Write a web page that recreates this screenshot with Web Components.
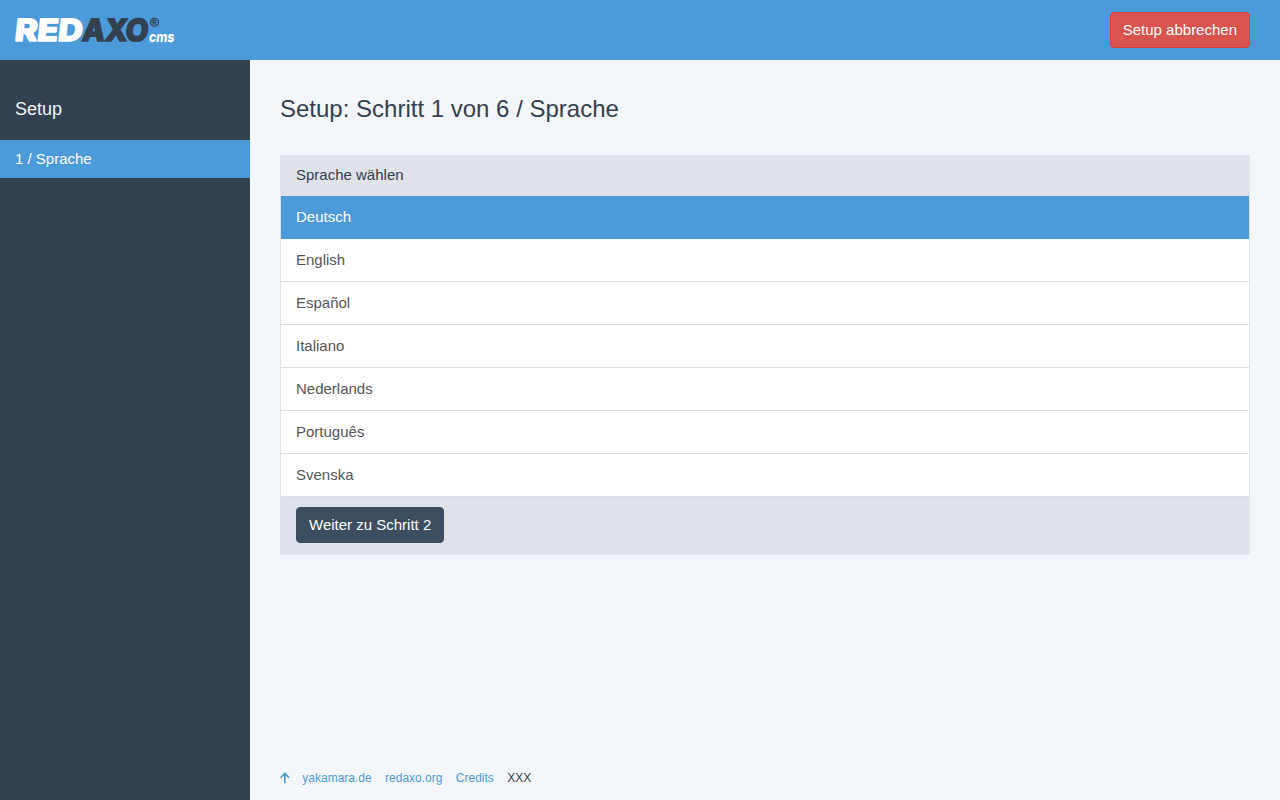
<!DOCTYPE html>
<html lang="de">
<head>
<meta charset="utf-8">
<title>Setup</title>
<style>
html,body{margin:0;height:100%}
body{font:15px/21px "Liberation Sans",Arial,sans-serif;color:#324050;background:#f3f6fb;overflow:hidden}
</style>
</head>
<body>
<setup-app></setup-app>
<script>
const define = (name, html) => customElements.define(name, class extends HTMLElement {
  constructor() {
    super();
    this.attachShadow({mode: 'open'}).innerHTML = html;
  }
});

define('brand-logo', `
<style>
:host{display:block;width:164px;height:30px}
svg{display:block;overflow:visible}
text{font-family:Inter,"Liberation Sans",sans-serif;font-weight:800}
.w{fill:#fff;stroke:#fff}.d{fill:#324050;stroke:#324050}
</style>
<svg width="164" height="30" viewBox="0 0 164 30" role="img" aria-label="REDAXO cms">
  <g transform="translate(0 26.2) skewX(-6)" font-size="30.6" stroke-width="1.6" stroke-linejoin="round">
    <text class="w" x="-1" y="0" textLength="68" lengthAdjust="spacingAndGlyphs">RED</text>
    <text class="d" x="66.6" y="0" textLength="66" lengthAdjust="spacingAndGlyphs">AXO</text>
  </g>
  <circle cx="139.5" cy="7.4" r="3.9" fill="none" stroke="#324050" stroke-width="1.3"/>
  <text class="d" x="137.2" y="9.8" font-size="6.6" stroke="none" stroke-width="0">R</text>
  <g transform="translate(133.6 26.8) skewX(-6)">
    <text class="w" x="0" y="0" font-size="14.5" stroke-width="0" textLength="25.5" lengthAdjust="spacingAndGlyphs">cms</text>
  </g>
</svg>`);

define('ui-button', `
<style>
:host{display:inline-block}
button{display:block;box-sizing:border-box;height:36px;margin:0;padding:0 12px;border:1px solid #3c4d60;border-radius:4px;background:#3c4d60;color:#fff;font:inherit;line-height:34px;white-space:nowrap}
:host([danger]) button{background:#d9534f;border-color:#d43f3a}
</style><button><slot></slot></button>`);

define('top-bar', `
<style>
:host{display:flex;box-sizing:border-box;height:60px;padding:0 30px 0 15px;align-items:center;justify-content:space-between;background:#4b9ad9}
</style><brand-logo></brand-logo><slot></slot>`);

define('side-nav', `
<style>
:host{display:block;background:#324050;color:#fff}
h4{margin:0;padding:39px 15px 21px;font-size:18px;font-weight:400;line-height:20px;color:#f3f6fb}
.item{padding:0 15px;height:38px;line-height:38px;background:#4b9ad9}
</style><h4><slot name="title"></slot></h4><div class="item"><slot></slot></div>`);

define('list-item', `
<style>
:host{display:block;box-sizing:border-box;height:43px;padding:0 15px;line-height:42px;background:#fff;border-bottom:1px solid #dddddd;color:#555}
:host([active]){background:#4b9ad9;border-color:#4b9ad9;color:#fff}
</style><slot></slot>`);

define('choice-panel', `
<style>
:host{display:block;border:1px solid #dfe3e9;border-bottom-color:#e6eaf0;background:#dfe3e9 padding-box}
header{height:40px;line-height:38px;padding:0 15px}
footer{display:flex;padding:10px 15px 11px}
</style>
<header><slot name="heading"></slot></header><slot></slot><footer><slot name="action"></slot></footer>`);

define('page-footer', `
<style>
:host{display:flex;align-items:center;font-size:12px;line-height:18px}
svg{display:block;width:10px;height:12px;margin-right:12.3px}
a{color:#4b9ad9;margin-right:13.4px}
</style>
<svg viewBox="0 0 10 12" fill="none" stroke="#4b9ad9" stroke-width="1.6"><path d="M4.8 11.3V1.6M.6 5.7l4.2-4.2 4.2 4.2"/></svg>
<a>yakamara.de</a><a>redaxo.org</a><a>Credits</a><span>XXX</span>`);

define('setup-app', `
<style>
:host{display:grid;height:100vh;grid-template:60px 1fr / 250px 1fr}
top-bar{grid-column:1/-1}
main{display:flex;flex-direction:column;padding:34px 30px 13px}
h1{margin:0 0 31px;font-size:24px;line-height:30px;font-weight:400}
page-footer{margin-top:auto}
</style>
<top-bar><ui-button danger>Setup abbrechen</ui-button></top-bar>
<side-nav><span slot="title">Setup</span>1 / Sprache</side-nav>
<main>
  <h1>Setup: Schritt 1 von 6 / Sprache</h1>
  <choice-panel>
    <span slot="heading">Sprache wählen</span>
    <list-item active>Deutsch</list-item>
    <list-item>English</list-item>
    <list-item>Español</list-item>
    <list-item>Italiano</list-item>
    <list-item>Nederlands</list-item>
    <list-item>Português</list-item>
    <list-item>Svenska</list-item>
    <ui-button slot="action">Weiter zu Schritt 2</ui-button>
  </choice-panel>
  <page-footer></page-footer>
</main>`);
</script>
</body>
</html>
